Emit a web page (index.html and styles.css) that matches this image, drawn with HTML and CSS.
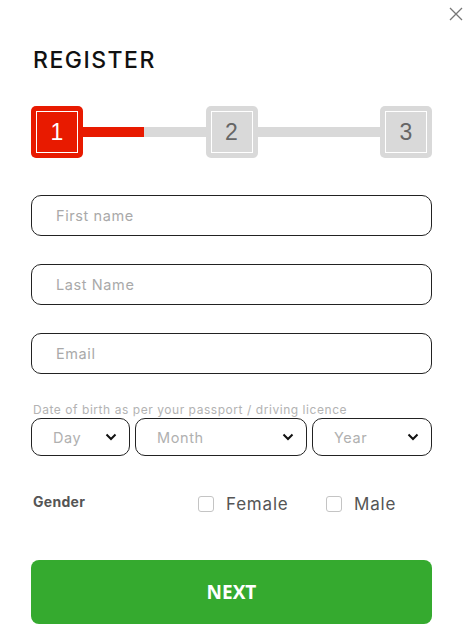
FILE: index.html
```html
<!DOCTYPE html>
<html lang="en">
<head>
<meta charset="utf-8">
<title>Register</title>
<link rel="stylesheet" href="styles.css">
</head>
<body>
<div class="modal">
  <button class="close" aria-label="Close">
    <svg width="14" height="14" viewBox="0 0 14 14"><path d="M1 1L13 13M13 1L1 13" stroke="#777" stroke-width="1.3" fill="none"/></svg>
  </button>
  <h1 class="title">REGISTER</h1>
  <div class="stepper">
    <div class="step active"><span class="step-inner">1</span></div>
    <div class="bar"><div class="bar-fill"></div></div>
    <div class="step"><span class="step-inner">2</span></div>
    <div class="bar"></div>
    <div class="step"><span class="step-inner">3</span></div>
  </div>
  <form class="form">
    <input class="field" type="text" placeholder="First name">
    <input class="field" type="text" placeholder="Last Name">
    <input class="field" type="email" placeholder="Email">
    <div class="dob">
      <div class="dob-label">Date of birth as per your passport / driving licence</div>
      <div class="selects">
        <div class="select day"><span>Day</span><svg class="chev" width="12" height="8" viewBox="0 0 12 8"><path d="M1.5 1.5L6 6L10.5 1.5" stroke="#111" stroke-width="2" fill="none"/></svg></div>
        <div class="select month"><span>Month</span><svg class="chev" width="12" height="8" viewBox="0 0 12 8"><path d="M1.5 1.5L6 6L10.5 1.5" stroke="#111" stroke-width="2" fill="none"/></svg></div>
        <div class="select year"><span>Year</span><svg class="chev" width="12" height="8" viewBox="0 0 12 8"><path d="M1.5 1.5L6 6L10.5 1.5" stroke="#111" stroke-width="2" fill="none"/></svg></div>
      </div>
    </div>
    <div class="gender">
      <span class="gender-label">Gender</span>
      <label class="opt female"><span class="box"></span>Female</label>
      <label class="opt male"><span class="box"></span>Male</label>
    </div>
    <button type="button" class="next">NEXT</button>
  </form>
</div>
</body>
</html>
```
FILE: styles.css
```css
* { box-sizing: border-box; }
html, body { margin: 0; padding: 0; background: #fff; }
body { font-family: Inter, "Open Sans", sans-serif; color: #222; }
.modal { position: relative; width: 471px; height: 639px; padding: 46px 39px 0 31px; }
.close { position: absolute; top: 7px; left: 449px; width: 14px; height: 14px; padding: 0; border: 0; background: none; }
.close svg { display: block; }
.title { margin: 0 0 0 2px; font-size: 23px; line-height: 28px; font-weight: 500; letter-spacing: 1.5px; color: #111; }
.stepper { display: flex; align-items: center; margin-top: 32px; height: 52px; }
.step { width: 52px; height: 52px; flex: none; border-radius: 5px; background: #d9d9d9; padding: 5px; }
.step-inner { display: flex; align-items: center; justify-content: center; width: 100%; height: 100%; border: 1.5px solid #fff; font-family: "Liberation Sans", Arial, sans-serif; font-size: 23px; color: #666; }
.step.active { background: #e81a00; }
.step.active .step-inner { color: #fff; }
.bar { flex: 1; height: 10px; background: #d9d9d9; }
.bar-fill { width: 50%; height: 100%; background: #e81a00; }
.form { display: flex; flex-direction: column; margin-top: 37px; }
.field { display: block; width: 401px; height: 41px; border: 1px solid #222; border-radius: 10px; padding: 0 0 0 24px; font-family: inherit; font-size: 14.5px; letter-spacing: 0.6px; color: #222; background: #fff; outline: none; margin-bottom: 28px; }
.field::placeholder { color: #a9a9a9; }
.dob-label { margin-top: 1px; font-size: 12px; letter-spacing: 0.55px; color: #b3b3b3; line-height: 14px; padding-left: 2px; }
.selects { display: flex; gap: 5px; margin-top: 1px; }
.select { display: flex; align-items: center; justify-content: space-between; height: 38px; border: 1px solid #222; border-radius: 10px; padding: 0 12px 0 21px; font-size: 14.5px; letter-spacing: 0.6px; color: #b0b0b0; }
.select.day { width: 99px; }
.select.month { width: 172px; }
.select.year { width: 120px; }
.chev { display: block; }
.gender { display: flex; align-items: center; margin-top: 35px; height: 20px; }
.gender-label { width: 167px; padding-left: 2px; font-size: 14px; font-weight: 700; letter-spacing: 0.3px; color: #555; }
.opt { display: flex; align-items: center; font-size: 17px; letter-spacing: 0.8px; color: #555; margin-top: 5px; }
.opt .box { width: 16px; height: 16px; border: 1.5px solid #c4c4c4; border-radius: 3px; margin-right: 12px; }
.female { width: 128px; }
.next { margin-top: 49px; width: 401px; height: 64px; border: 0; border-radius: 8px; background: #35aa2f; color: #fff; font-family: "Open Sans", sans-serif; font-weight: 700; font-size: 19px; }
```
